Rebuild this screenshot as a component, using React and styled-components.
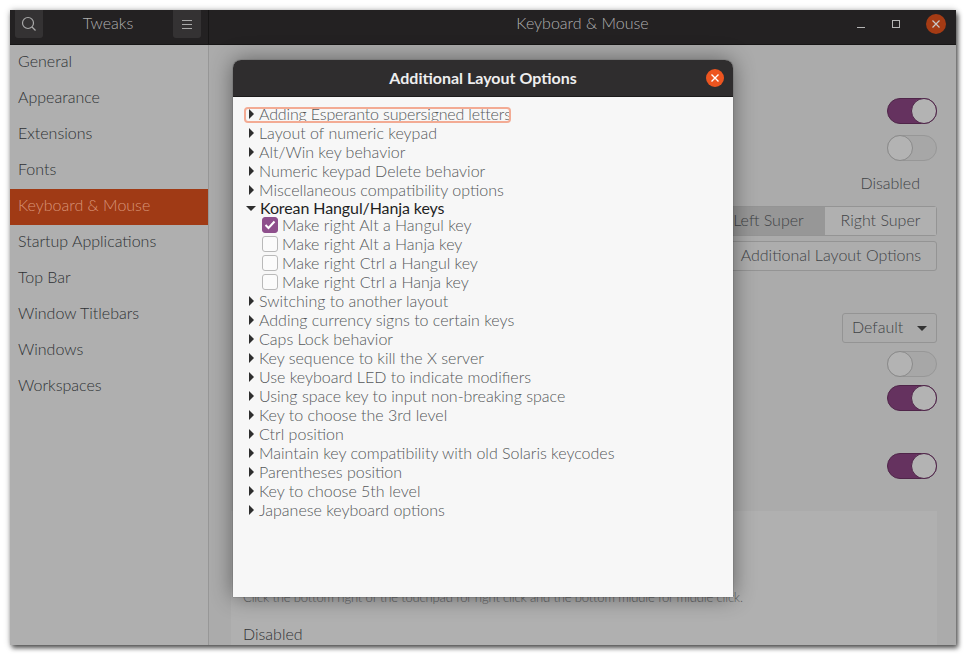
import React from "react";
import styled, { createGlobalStyle } from "styled-components";

const GlobalStyle = createGlobalStyle`
  html, body {
    margin: 0;
    padding: 0;
    background: #fff;
    font-family: "Lato", "Open Sans", sans-serif;
    font-weight: 300;
    font-size: 16px;
  }
`;

const sidebarItems = [
  "General",
  "Appearance",
  "Extensions",
  "Fonts",
  "Keyboard & Mouse",
  "Startup Applications",
  "Top Bar",
  "Window Titlebars",
  "Windows",
  "Workspaces",
];

const topItems = [
  "Adding Esperanto supersigned letters",
  "Layout of numeric keypad",
  "Alt/Win key behavior",
  "Numeric keypad Delete behavior",
  "Miscellaneous compatibility options",
];

const koreanOptions = [
  { label: "Make right Alt a Hangul key", checked: true },
  { label: "Make right Alt a Hanja key" },
  { label: "Make right Ctrl a Hangul key" },
  { label: "Make right Ctrl a Hanja key" },
];

const bottomItems = [
  "Switching to another layout",
  "Adding currency signs to certain keys",
  "Caps Lock behavior",
  "Key sequence to kill the X server",
  "Use keyboard LED to indicate modifiers",
  "Using space key to input non-breaking space",
  "Key to choose the 3rd level",
  "Ctrl position",
  "Maintain key compatibility with old Solaris keycodes",
  "Parentheses position",
  "Key to choose 5th level",
  "Japanese keyboard options",
];

const App = () => {
  return (
    <Page>
      <GlobalStyle />
      <Window>
        <HeaderBar>
          <HeaderLeft>
            <HeaderButton>
              <svg width="18" height="18" viewBox="0 0 18 18" fill="none" stroke="#a9a9a9" strokeWidth="1.2">
                <circle cx="8" cy="8" r="5.5" />
                <path d="M12 12l3.5 3.5" />
              </svg>
            </HeaderButton>
            <AppTitle>Tweaks</AppTitle>
            <HeaderButton>
              <svg width="14" height="14" viewBox="0 0 14 14" stroke="#a9a9a9" strokeWidth="1">
                <path d="M2 3.5h10M2 7.5h10M2 11.5h10" />
              </svg>
            </HeaderButton>
          </HeaderLeft>
          <HeaderRight>
            <PageTitle>Keyboard &amp; Mouse</PageTitle>
            <WindowControls>
              <svg width="10" height="10" viewBox="0 0 10 10" stroke="#b5b5b5" strokeWidth="1">
                <path d="M1 8.5h8" />
              </svg>
              <svg width="10" height="10" viewBox="0 0 10 10" fill="none" stroke="#b5b5b5" strokeWidth="1">
                <rect x="1.5" y="1.5" width="7" height="7" />
              </svg>
              <WindowClose>
                <svg width="10" height="10" viewBox="0 0 10 10" stroke="#c9c9c9" strokeWidth="1.2">
                  <path d="M1.5 1.5l7 7M8.5 1.5l-7 7" />
                </svg>
              </WindowClose>
            </WindowControls>
          </HeaderRight>
        </HeaderBar>

        <Body>
          <Sidebar>
            {sidebarItems.map((item) => (
              <SidebarItem key={item} $active={item === "Keyboard & Mouse"}>
                {item}
              </SidebarItem>
            ))}
          </Sidebar>

          <Main>
            <Toggle $on $top={53} />
            <Toggle $top={11} />
            <ValueLabel>Disabled</ValueLabel>
            <SegmentGroup>
              <Segment $pressed>Left Super</Segment>
              <Segment>Right Super</Segment>
            </SegmentGroup>
            <WideButton>Additional Layout Options</WideButton>
            <Combo>
              Default
              <ComboArrow />
            </Combo>
            <Toggle $top={8} />
            <Toggle $top={8} $on />
            <Toggle $top={42} $on />
            <TouchPanel>
              <PanelHint>Click the bottom right of the touchpad for right click and the bottom middle for middle click.</PanelHint>
              <PanelTitle>Disabled</PanelTitle>
              <PanelSub>Don't use mouse click emulation.</PanelSub>
            </TouchPanel>
          </Main>
        </Body>

        <Dialog>
          <DialogHeader>
            Additional Layout Options
            <DialogClose>
              <svg width="10" height="10" viewBox="0 0 10 10" stroke="#fff" strokeWidth="1.4">
                <path d="M1.5 1.5l7 7M8.5 1.5l-7 7" />
              </svg>
            </DialogClose>
          </DialogHeader>
          <Tree>
            {topItems.map((item, i) => (
              <TreeRow key={item}>
                <ArrowRight />
                {i === 0 ? <FocusLabel>{item}</FocusLabel> : <TreeLabel>{item}</TreeLabel>}
              </TreeRow>
            ))}
            <ExpandedRow>
              <ArrowDown />
              <ExpandedLabel>Korean Hangul/Hanja keys</ExpandedLabel>
            </ExpandedRow>
            {koreanOptions.map((opt) => (
              <OptionRow key={opt.label}>
                <CheckBox $checked={opt.checked}>
                  {opt.checked && (
                    <svg width="12" height="10" viewBox="0 0 12 10" fill="none" stroke="#fff" strokeWidth="2">
                      <path d="M1.5 5l3 3 6-6.5" />
                    </svg>
                  )}
                </CheckBox>
                <TreeLabel>{opt.label}</TreeLabel>
              </OptionRow>
            ))}
            {bottomItems.map((item) => (
              <TreeRow key={item}>
                <ArrowRight />
                <TreeLabel>{item}</TreeLabel>
              </TreeRow>
            ))}
          </Tree>
        </Dialog>
      </Window>
    </Page>
  );
};

const Page = styled.div`
  width: 972px;
  height: 661px;
  padding: 10px 16px 16px 10px;
  box-sizing: border-box;
  background: #fff;
  overflow: hidden;
`;

const Window = styled.div`
  position: relative;
  width: 946px;
  height: 635px;
  display: flex;
  flex-direction: column;
  border-radius: 3px 3px 0 0;
  box-shadow: 2px 3px 5px rgba(0, 0, 0, 0.65), 0 0 6px rgba(0, 0, 0, 0.25);
`;

const HeaderBar = styled.div`
  height: 35px;
  flex: none;
  display: flex;
  background: #232122;
  border-bottom: 1px solid #171616;
  box-sizing: border-box;
`;

const HeaderLeft = styled.div`
  width: 199px;
  flex: none;
  box-sizing: border-box;
  padding: 0 7px 7px 5px;
  display: flex;
  justify-content: space-between;
  border-right: 1px solid #161515;
`;

const HeaderButton = styled.div`
  width: 28px;
  height: 28px;
  background: #343233;
  border-radius: 0 0 3px 3px;
  display: flex;
  align-items: center;
  justify-content: center;
`;

const AppTitle = styled.div`
  color: #b0b0b0;
  line-height: 25px;
`;

const HeaderRight = styled.div`
  flex: 1;
  position: relative;
  display: flex;
  justify-content: center;
`;

const PageTitle = styled.div`
  color: #b0b0b0;
  line-height: 25px;
`;

const WindowControls = styled.div`
  position: absolute;
  right: 10px;
  top: 4px;
  display: flex;
  align-items: center;
  gap: 25px;
`;

const WindowClose = styled.div`
  width: 20px;
  height: 20px;
  border-radius: 50%;
  background: #a53b14;
  display: flex;
  align-items: center;
  justify-content: center;
`;

const Body = styled.div`
  flex: 1;
  min-height: 0;
  display: flex;
`;

const Sidebar = styled.div`
  width: 199px;
  flex: none;
  box-sizing: border-box;
  background: #afafaf;
  border-right: 1px solid #979797;
`;

const SidebarItem = styled.div`
  height: 36px;
  padding-left: 8px;
  line-height: 32px;
  color: ${(p) => (p.$active ? "#d89478" : "#2e3134")};
  background: ${(p) => (p.$active ? "#a03a15" : "transparent")};
`;

const Main = styled.div`
  flex: 1;
  min-width: 0;
  background: #ababab;
  padding: 0 19px 0 22px;
  display: flex;
  flex-direction: column;
  align-items: flex-end;
  overflow: hidden;
`;

const Toggle = styled.div`
  position: relative;
  flex: none;
  width: 50px;
  height: 26px;
  box-sizing: border-box;
  margin-top: ${(p) => p.$top}px;
  border-radius: 13px;
  background: ${(p) => (p.$on ? "#65325f" : "#a7a7a7")};
  border: 1px solid ${(p) => (p.$on ? "#4f2549" : "#979797")};

  &::after {
    content: "";
    position: absolute;
    top: -1px;
    ${(p) => (p.$on ? "right: -1px;" : "left: -1px;")}
    width: 24px;
    height: 24px;
    border-radius: 50%;
    background: #b3b3b3;
    border: 1px solid ${(p) => (p.$on ? "#4f2549" : "#8a8a8a")};
  }
`;

const ValueLabel = styled.div`
  margin-top: 12px;
  margin-right: 17px;
  height: 20px;
  line-height: 20px;
  color: #3f4346;
`;

const SegmentGroup = styled.div`
  margin-top: 13px;
  display: flex;
  height: 30px;
  box-sizing: border-box;
  border: 1px solid #949494;
  border-radius: 3px;
`;

const Segment = styled.div`
  width: ${(p) => (p.$pressed ? "110px" : "111px")};
  box-sizing: border-box;
  padding-right: ${(p) => (p.$pressed ? "3px" : "0")};
  text-align: center;
  line-height: 25px;
  color: #3f4346;
  background: ${(p) => (p.$pressed ? "#979797" : "#b0b0b0")};
`;

const WideButton = styled.div`
  margin-top: 5px;
  width: 300px;
  height: 30px;
  box-sizing: border-box;
  padding-right: 15px;
  text-align: right;
  line-height: 25px;
  color: #3f4346;
  background: #adadad;
  border: 1px solid #949494;
  border-radius: 3px;
`;

const Combo = styled.div`
  margin-top: 42px;
  width: 95px;
  height: 30px;
  box-sizing: border-box;
  padding: 0 9px 3px;
  display: flex;
  align-items: center;
  justify-content: space-between;
  color: #3f4346;
  border: 1px solid #949494;
  border-radius: 3px;
`;

const ComboArrow = styled.span`
  width: 0;
  height: 0;
  margin-top: 3px;
  border-left: 5px solid transparent;
  border-right: 5px solid transparent;
  border-top: 5px solid #333;
`;

const TouchPanel = styled.div`
  flex: 1;
  align-self: stretch;
  margin-top: 32px;
  background: #b0b0b0;
  padding: 78px 12px 0;
  font-size: 13px;
  letter-spacing: -0.15px;
  color: #5e6163;
  overflow: hidden;
`;

const PanelHint = styled.div`
  white-space: nowrap;
  line-height: 16px;
`;

const PanelTitle = styled.div`
  margin-top: 18px;
  font-size: 16px;
  letter-spacing: 0;
  line-height: 22px;
  color: #303336;
`;

const PanelSub = styled.div`
  line-height: 16px;
`;

const Dialog = styled.div`
  position: absolute;
  left: 223px;
  top: 50px;
  width: 500px;
  height: 537px;
  display: flex;
  flex-direction: column;
  background: #f7f7f7;
  border-radius: 8px 8px 0 0;
  box-shadow: 0 0 22px rgba(0, 0, 0, 0.45), 0 0 1px rgba(0, 0, 0, 0.8);
`;

const DialogHeader = styled.div`
  position: relative;
  height: 37px;
  flex: none;
  box-sizing: border-box;
  background: #2f2d2e;
  border-bottom: 1px solid #1c1b1b;
  border-radius: 8px 8px 0 0;
  color: #eee;
  font-size: 16px;
  font-weight: 700;
  line-height: 35px;
  text-align: center;
`;

const DialogClose = styled.div`
  position: absolute;
  right: 9px;
  top: 9px;
  width: 18px;
  height: 18px;
  border-radius: 50%;
  background: #ed5520;
  display: flex;
  align-items: center;
  justify-content: center;
`;

const Tree = styled.div`
  padding: 7px 0 0 13px;
`;

const TreeRow = styled.div`
  height: 19px;
  display: flex;
  align-items: center;
`;

const ExpandedRow = styled(TreeRow)`
  height: 16px;
  margin: 1px 0 -1px -1px;
`;

const OptionRow = styled(TreeRow)`
  padding-left: 16px;
`;

const ArrowRight = styled.span`
  flex: none;
  width: 0;
  height: 0;
  margin: 0 5px 0 3px;
  border-top: 5px solid transparent;
  border-bottom: 5px solid transparent;
  border-left: 5px solid #2e2e2e;
`;

const ArrowDown = styled.span`
  flex: none;
  width: 0;
  height: 0;
  margin: 0 4px 0 1px;
  border-left: 5px solid transparent;
  border-right: 5px solid transparent;
  border-top: 5px solid #2e2e2e;
`;

const TreeLabel = styled.span`
  line-height: 19px;
  white-space: nowrap;
  color: #55575a;
`;

const ExpandedLabel = styled(TreeLabel)`
  line-height: 16px;
  font-weight: 400;
  letter-spacing: -0.1px;
  color: #1f1f1f;
`;

const FocusLabel = styled(TreeLabel)`
  letter-spacing: -0.15px;

  &::before {
    content: "";
    position: absolute;
    left: 11px;
    top: 47px;
    width: 263px;
    height: 12px;
    border: 2px solid #f3ab94;
    border-radius: 4px;
  }
`;

const CheckBox = styled.span`
  flex: none;
  width: 16px;
  height: 16px;
  margin-right: 4px;
  box-sizing: border-box;
  border-radius: 3px;
  display: flex;
  align-items: center;
  justify-content: center;
  background: ${(p) => (p.$checked ? "#8e4f8c" : "#fbfbfb")};
  border: 1px solid ${(p) => (p.$checked ? "#8e4f8c" : "#b9b9b9")};
`;

export default App;
